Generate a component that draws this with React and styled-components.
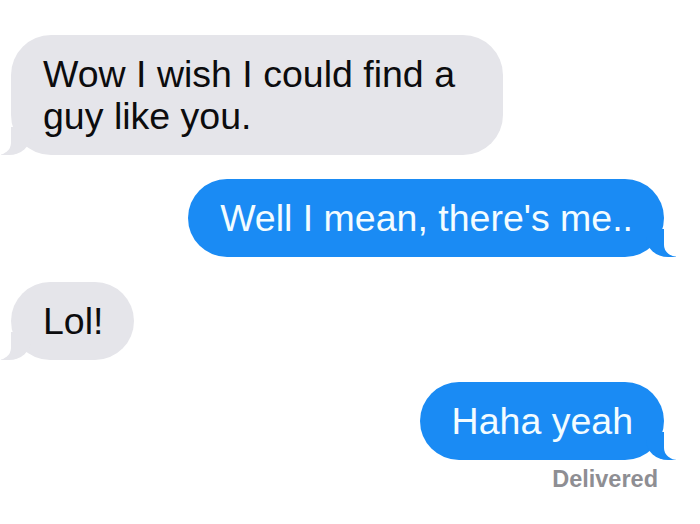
import styled, { createGlobalStyle, css } from "styled-components";

const GlobalStyle = createGlobalStyle`
    html, body {
        margin: 0;
        padding: 0;
        background: #ffffff;
    }
    body {
        font-family: "Liberation Sans", Arial, sans-serif;
    }
`

const Thread = styled.div`
    width: 700px;
    height: 524px;
    box-sizing: border-box;
    padding: 35px 36px 0 11px;
    display: flex;
    flex-direction: column;
    background: #ffffff;
    overflow: hidden;
`

const Bubble = styled.div`
    position: relative;
    box-sizing: border-box;
    max-width: 492px;
    padding: 18px 31px 18px 32px;
    border-radius: 40px;
    font-size: 37.5px;
    line-height: 42px;
    margin-top: ${(p) => p.$gap || 0}px;

    &::before,
    &::after {
        content: "";
        position: absolute;
        bottom: 0;
    }

    ${(p) => p.$sent ? css`
        align-self: flex-end;
        background: #1a8bf4;
        color: #f3fcff;

        &::before {
            right: -12px;
            width: 30px;
            height: 28px;
            background: #1a8bf4;
            border-bottom-left-radius: 22px 20px;
        }
        &::after {
            right: -18px;
            width: 18px;
            height: 30px;
            background: #ffffff;
            border-bottom-left-radius: 14px 12px;
        }
    ` : css`
        align-self: flex-start;
        background: #e5e5ea;
        color: #0c0c0e;

        &::before {
            left: -10px;
            width: 30px;
            height: 28px;
            background: #e5e5ea;
            border-bottom-right-radius: 22px 20px;
        }
        &::after {
            left: -18px;
            width: 18px;
            height: 30px;
            background: #ffffff;
            border-bottom-right-radius: 14px 12px;
        }
    `}
`

const Text = styled.span`
    position: relative;
    z-index: 1;
`

const Status = styled.div`
    align-self: flex-end;
    margin-top: 6px;
    margin-right: 6px;
    font-size: 23.5px;
    line-height: 27px;
    font-weight: 700;
    color: #8e8e93;
`

const messages = [
    { text: "Wow I wish I could find a guy like you.", sent: false, gap: 0 },
    { text: "Well I mean, there's me..", sent: true, gap: 24 },
    { text: "Lol!", sent: false, gap: 25 },
    { text: "Haha yeah", sent: true, gap: 22 },
]

function App(){
    return(
        <>
            <GlobalStyle />
            <Thread>
                {messages.map((m, i) => (
                    <Bubble key={i} $sent={m.sent} $gap={m.gap}>
                        <Text>{m.text}</Text>
                    </Bubble>
                ))}
                <Status>Delivered</Status>
            </Thread>
        </>
    )
}
export default App
